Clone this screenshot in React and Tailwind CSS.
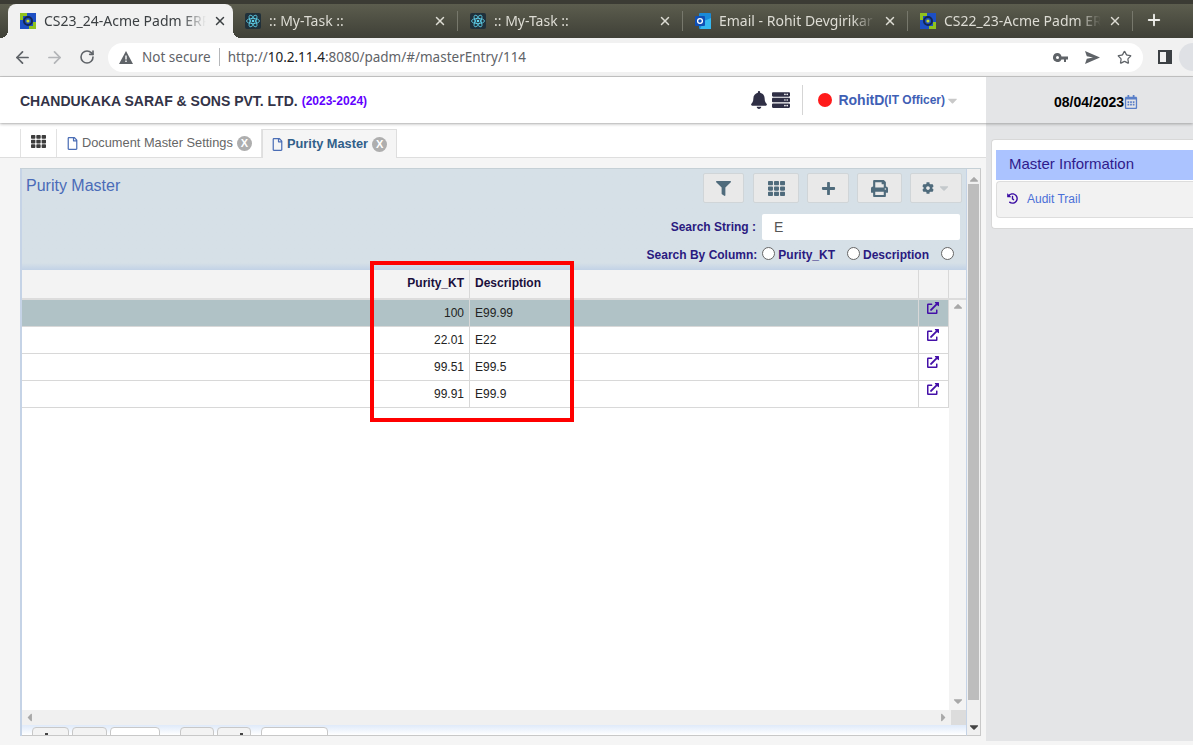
import React from 'react'
import { ArrowLeft, ArrowRight, RotateCw, Star, X, Plus } from 'lucide-react'
import { FaFilter, FaTh, FaPlus, FaPrint, FaCog, FaBell, FaServer, FaRegCalendarAlt, FaHistory, FaExternalLinkAlt, FaRegFile, FaCaretDown, FaCaretUp, FaCaretLeft, FaCaretRight } from 'react-icons/fa'

const AcmeIcon = () => (
    <svg width="16" height="16" viewBox="0 0 16 16" className="shrink-0">
        <rect width="16" height="16" fill="#1d4fc4" />
        <path d="M0 0h7v3H3v4H0zM9 13h4V9h3v7H9z" fill="#8fc31f" />
        <circle cx="8" cy="8" r="4" fill="none" stroke="#14264f" strokeWidth="2" />
        <circle cx="8" cy="8" r="1.6" fill="#c8d92b" />
    </svg>
)

const ReactIcon = () => (
    <svg width="16" height="16" viewBox="0 0 16 16" className="shrink-0">
        <rect width="16" height="16" rx="2" fill="#20303a" />
        <g fill="none" stroke="#5fd3ee" strokeWidth="0.8">
            <ellipse cx="8" cy="8" rx="6.5" ry="2.6" />
            <ellipse cx="8" cy="8" rx="6.5" ry="2.6" transform="rotate(60 8 8)" />
            <ellipse cx="8" cy="8" rx="6.5" ry="2.6" transform="rotate(120 8 8)" />
        </g>
        <circle cx="8" cy="8" r="1.3" fill="#5fd3ee" />
    </svg>
)

const OutlookIcon = () => (
    <svg width="16" height="16" viewBox="0 0 16 16" className="shrink-0">
        <rect x="4" width="12" height="16" rx="1" fill="#1a8ad8" />
        <path d="M9 8l7-3v11H5z" fill="#35b8f0" />
        <rect y="3" width="10" height="10" rx="1" fill="#0f4fb5" />
        <circle cx="5" cy="8" r="2.4" fill="none" stroke="#fff" strokeWidth="1.3" />
    </svg>
)

const browserTabs = [
    { title: 'CS23_24-Acme Padm ERP', icon: <AcmeIcon />, active: true },
    { title: ':: My-Task ::', icon: <ReactIcon /> },
    { title: ':: My-Task ::', icon: <ReactIcon /> },
    { title: 'Email - Rohit Devgirikar', icon: <OutlookIcon /> },
    { title: 'CS22_23-Acme Padm ERP', icon: <AcmeIcon /> },
]

const BrowserTabs = () => {
    return (
        <div className="h-[38px] flex bg-gradient-to-b from-[#5c5d4e] to-[#3f4037] border-t-4 border-[#3b3b34] pl-2 font-['Noto_Sans',sans-serif] text-sm">
            {browserTabs.map((tab, i) => (
                <div key={i} className={tab.active
                    ? "relative w-[225px] h-[34px] flex items-center pl-3 gap-2 bg-[#f1f1f1] rounded-t-lg text-[#3c4043]"
                    : "w-[225px] h-[34px] flex items-center pl-3 gap-2 text-[#dddcd4]"}>
                    {tab.icon}
                    <span className="w-[162px] overflow-hidden whitespace-nowrap [mask-image:linear-gradient(to_right,black_85%,transparent)]">{tab.title}</span>
                    <X size={14} strokeWidth={2.5} className="shrink-0 -ml-[1px]" />
                    {i > 0 && <span className="h-5 w-px bg-[#77786c] ml-[2px]"></span>}
                    {tab.active && <span className="absolute -left-2 bottom-0 w-2 h-2 bg-[radial-gradient(circle_at_0_0,transparent_8px,#f1f1f1_8px)]"></span>}
                    {tab.active && <span className="absolute -right-2 bottom-0 w-2 h-2 bg-[radial-gradient(circle_at_100%_0,transparent_8px,#f1f1f1_8px)]"></span>}
                </div>
            ))}
            <Plus size={18} strokeWidth={2.5} className="text-[#eeeeea] ml-[12px] mt-[7px]" />
        </div>
    )
}

const BrowserToolbar = () => {
    return (
        <div className="h-[39px] flex items-center bg-[#f1f1f1] border-b border-[#c9c9c9] font-['Noto_Sans',sans-serif]">
            <ArrowLeft size={19} strokeWidth={2.2} className="text-[#5f6368] ml-[13px] shrink-0" />
            <ArrowRight size={19} strokeWidth={2.2} className="text-[#b3b5b8] ml-[13px] shrink-0" />
            <RotateCw size={16} strokeWidth={2.4} className="text-[#5f6368] ml-[15px] shrink-0" />
            <div className="w-[1035px] h-[29px] ml-[13px] shrink-0 flex items-center bg-white rounded-full pl-[11px] text-[13.5px]">
                <svg width="14" height="13" viewBox="0 0 14 13"><path d="M7 0l7 13H0z" fill="#5f6368" /><path d="M6.3 4.5h1.4v4H6.3zM6.3 9.5h1.4v1.4H6.3z" fill="#fff" /></svg>
                <span className="ml-[9px] text-[#5f6368]">Not secure</span>
                <span className="h-[18px] w-px bg-[#b5b7ba] ml-[8px]"></span>
                <span className="ml-[8px] text-[#5f6368]">http://<span className="text-[#202124]">10.2.11.4</span>:8080/padm/#/masterEntry/114</span>
                <svg width="15" height="9" viewBox="0 0 15 9" className="ml-auto text-[#5f6368]">
                    <path d="M4.5 0a4.5 4.5 0 1 0 4 6.5H11V9h2V6.5h2v-3H8.500A4.500 4.500 0 0 0 4.500 0zm0 3a1.500 1.500 0 1 1 0 3 1.500 1.500 0 0 1 0-3z" fill="currentColor" />
                </svg>
                <svg width="15" height="13" viewBox="0 0 15 13" className="ml-[17px] text-[#5f6368]">
                    <path d="M0 0l15 6.500L0 13l1.800-5.300L8 6.500 1.800 5.300z" fill="currentColor" />
                </svg>
                <Star size={15} strokeWidth={2} className="text-[#5f6368] ml-[17px] mr-[11px]" />
            </div>
            <div className="w-[14px] h-[14px] ml-[15px] shrink-0 border-2 border-[#3c4043] border-r-[6px]"></div>
            <div className="w-[28px] h-[28px] ml-[7px] rounded-full bg-[#dfe1e5] shrink-0"></div>
        </div>
    )
}

const PageHeader = () => {
    return (
        <div className="h-[46px] flex relative z-10 shadow-[0_1px_3px_rgba(0,0,0,0.3)]">
            <div className="w-[986px] bg-white flex items-center pl-5">
                <span className="mt-[2px] text-sm font-bold text-[#333347]">CHANDUKAKA SARAF & SONS PVT. LTD.</span>
                <span className="mt-[2px] ml-[4px] text-xs font-bold text-[#6200ff]">(2023-2024)</span>
                <FaBell size={18} className="text-[#2f2f45] ml-auto" />
                <FaServer size={18} className="text-[#2f2f45] ml-[4px]" />
                <span className="h-[30px] w-px bg-[#d5d5d5] ml-3"></span>
                <span className="w-[14px] h-[14px] rounded-full bg-[#ff1a1a] ml-[15px]"></span>
                <span className="ml-[6px] text-sm font-bold text-[#3f60b5]">RohitD</span>
                <span className="text-xs font-bold text-[#3f60b5]">(IT Officer)</span>
                <FaCaretDown size={15} className="text-[#c9c9c9] mr-[26px]" />
            </div>
            <div className="flex-1 bg-[#e4e5e7] flex items-center pl-[68px] pt-[3px] text-sm font-bold text-black">
                08/04/2023
                <FaRegCalendarAlt size={14} className="text-[#5a7fc8]" />
            </div>
        </div>
    )
}

const CloseBadge = () => (
    <span className="w-[15px] h-[15px] ml-px rounded-full bg-[#aeaeae] text-white text-[11px] font-bold flex items-center justify-center">X</span>
)

const PageTabs = () => {
    return (
        <div className="h-[34px] mt-px pt-[5px] bg-white border-b border-[#dedede] flex pl-5 text-[12.8px]">
            <div className="w-[37px] border-x border-[#e2e2e2] flex items-center justify-center pb-[4px]">
                <FaTh size={15} className="text-[#3d3d3d]" />
            </div>
            <div className="w-[205px] flex items-center pl-[9px] gap-[3px] border-r border-[#e2e2e2] text-[#666]">
                <FaRegFile size={13} className="text-[#4a6db5] shrink-0" />
                <span>Document Master Settings</span>
                <CloseBadge />
            </div>
            <div className="w-[135px] h-[29px] flex items-center pl-[8px] gap-[3px] border-x border-t border-[#dedede] bg-[#f5f5f5] font-bold text-[#31608a]">
                <FaRegFile size={13} className="text-[#4a6db5] shrink-0" />
                <span>Purity Master</span>
                <CloseBadge />
            </div>
        </div>
    )
}

const toolButton = "h-[30px] flex items-center justify-center bg-[#e9e9e9] border border-[#d0d5d8] rounded-[2px] text-[#4f6b7c]"

const PanelHeader = () => {
    return (
        <div className="h-[101px] flex justify-between pl-[4px] pr-[4px] pt-[4px] bg-gradient-to-b from-[#d6e0e7] from-[93%] to-[#c2d2e6]">
            <h3 className="text-base text-[#4a6bb8] mt-[1px]">Purity Master</h3>
            <div className="flex flex-col items-end">
                <div className="flex">
                    <div className={toolButton + " w-[41px]"}><FaFilter size={15} /></div>
                    <div className={toolButton + " w-[46px] ml-[9px]"}><FaTh size={17} /></div>
                    <div className={toolButton + " w-[42px] ml-[8px]"}><FaPlus size={15} /></div>
                    <div className={toolButton + " w-[45px] ml-[8px]"}><FaPrint size={17} /></div>
                    <div className={toolButton + " w-[52px] ml-[8px] gap-[3px]"}>
                        <FaCog size={12} />
                        <FaCaretDown size={14} className="text-[#c4c9cc]" />
                    </div>
                </div>
                <div className="flex items-center mt-[11px] text-xs font-bold text-[#2a1a80]">
                    <span>Search String :</span>
                    <div className="w-[198px] h-[26px] ml-[6px] mr-[2px] bg-white rounded-[2px] flex items-center pl-3 text-sm font-normal text-[#555]">E</div>
                </div>
                <div className="flex items-center mt-[7px] text-xs font-bold text-[#2a1a80]">
                    <span>Search By Column:</span>
                    <span className="w-[13px] h-[13px] rounded-full bg-white border border-[#666] ml-[5px] -mt-[3px]"></span>
                    <span className="ml-[3px]">Purity_KT</span>
                    <span className="w-[13px] h-[13px] rounded-full bg-white border border-[#666] ml-3 -mt-[3px]"></span>
                    <span className="ml-[3px]">Description</span>
                    <span className="w-[13px] h-[13px] rounded-full bg-white border border-[#666] ml-3 mr-[8px] -mt-[3px]"></span>
                </div>
            </div>
        </div>
    )
}

const rows = [
    { kt: '100', desc: 'E99.99', selected: true },
    { kt: '22.01', desc: 'E22' },
    { kt: '99.51', desc: 'E99.5' },
    { kt: '99.91', desc: 'E99.9' },
]

const GridTable = () => {
    return (
        <div className="flex-1 flex flex-col bg-white min-h-0">
            <div className="h-[30px] flex bg-[#f3f3f3] border-b-2 border-[#dcdcdc] text-xs font-bold text-[#1a0f3c]">
                <div className="w-[448px] border-r border-[#d8d8d8] flex items-center justify-end pr-[5px] pb-[2px]">Purity_KT</div>
                <div className="w-[449px] border-r border-[#d8d8d8] flex items-center pl-[5px] pb-[2px]">Description</div>
                <div className="w-[30px] border-r border-[#d8d8d8]"></div>
            </div>
            <div className="flex-1 flex min-h-0">
                <div className="w-[927px]">
                    {rows.map((row, i) => (
                        <div key={i} className={row.selected
                            ? "h-[27px] flex bg-[#b0c2c6] border-b border-[#d8d8d8] text-xs text-[#222]"
                            : "h-[27px] flex bg-white border-b border-[#d8d8d8] text-xs text-[#222]"}>
                            <div className="w-[448px] border-r border-[#d8d8d8] flex items-center justify-end pr-[5px]">{row.kt}</div>
                            <div className="w-[449px] border-r border-[#d8d8d8] flex items-center pl-[5px]">{row.desc}</div>
                            <div className="w-[30px] border-r border-[#d8d8d8] flex justify-center pt-[2px] pr-[2px]">
                                <FaExternalLinkAlt size={12} className="text-[#4410a8]" />
                            </div>
                        </div>
                    ))}
                </div>
                <div className="flex-1 bg-[#f3f3f3] flex flex-col items-center justify-between pb-[2px]">
                    <FaCaretUp size={14} className="text-[#a8a8a8] mt-[-1px]" />
                    <FaCaretDown size={14} className="text-[#a8a8a8]" />
                </div>
            </div>
            <div className="h-[15px] flex bg-[#f0f0f0]">
                <div className="flex-1 flex items-center justify-between px-[1px]">
                    <FaCaretLeft size={13} className="text-[#a8a8a8]" />
                    <FaCaretRight size={13} className="text-[#a8a8a8]" />
                </div>
                <div className="w-[15px] bg-[#dcdcdc]"></div>
            </div>
        </div>
    )
}

const pagerButton = "h-[14px] bg-[#f3f3f3] border border-[#c8c8c8] rounded-t"

const PanelFooter = () => {
    return (
        <div className="h-[11px] shrink-0 flex items-start pt-[2px] pl-[10px] overflow-hidden bg-gradient-to-b from-[#dfeafa] to-white border-b border-[#c8c8c8]">
            <div className={pagerButton + " w-[37px]"}><div className="w-[3px] h-[2px] mt-[5px] ml-[12px] bg-[#444]"></div></div>
            <div className={pagerButton + " w-[35px] ml-[3px]"}></div>
            <div className={pagerButton + " w-[50px] ml-[3px] bg-white"}></div>
            <div className={pagerButton + " w-[34px] ml-[20px]"}></div>
            <div className={pagerButton + " w-[34px] ml-[3px]"}><div className="w-[3px] h-[2px] mt-[5px] ml-[22px] bg-[#444]"></div></div>
            <div className={pagerButton + " w-[67px] ml-[10px] bg-white"}></div>
            <span className="ml-[549px] mt-[5px] text-xs leading-4 text-[#333] whitespace-nowrap">View 1 - 4 of 4</span>
        </div>
    )
}

const OuterScrollbar = () => {
    return (
        <div className="w-[15px] flex flex-col items-center bg-[#f0f0f0] border-r border-b border-[#c8c8c8] border-l border-l-[#c5d3e6]">
            <FaCaretUp size={14} className="text-[#a8a8a8] mt-[3px] -mb-[3px] shrink-0" />
            <div className="w-[11px] flex-1 bg-[#bdbdbd] mt-[1px]"></div>
            <FaCaretDown size={14} className="text-[#444] mt-[20px] mb-[1px] shrink-0" />
        </div>
    )
}

const InfoPanel = () => {
    return (
        <div className="w-[207px] h-[618px] bg-[#e4e5e7] pt-4 pl-[5px]">
            <div className="h-[90px] pt-[10px] pl-[4px] bg-white border-y border-l border-[#d8d8d8] rounded-l">
                <div className="h-[30px] bg-[#abc3ff] flex items-center pl-[13px] pb-[2px] text-[15px] text-[#2f1a8c]">Master Information</div>
                <div className="h-[37px] mt-px pb-[2px] bg-[#f2f2f2] border-y border-l border-[#ddd] rounded-l flex items-center pl-[10px] text-xs">
                    <FaHistory size={11} className="text-[#3a0ca3]" />
                    <span className="ml-[9px] text-[#4a6fd8]">Audit Trail</span>
                </div>
            </div>
        </div>
    )
}

const App = () => {
    return (
        <div className="relative w-[1193px] h-[745px] overflow-hidden flex flex-col bg-[#f5f5f5] font-['Liberation_Sans',Arial,sans-serif]">
            <BrowserTabs />
            <BrowserToolbar />
            <PageHeader />
            <div className="flex-1 flex min-h-0">
                <div className="w-[986px] flex flex-col">
                    <PageTabs />
                    <div className="h-[568px] w-[961px] ml-5 mt-[10px] flex border-t border-[#c5d0d6]">
                        <div className="w-[946px] flex flex-col border-l-2 border-[#c5d3e6]">
                            <PanelHeader />
                            <GridTable />
                            <PanelFooter />
                        </div>
                        <OuterScrollbar />
                    </div>
                </div>
                <InfoPanel />
            </div>
            <div className="absolute left-[370px] top-[261px] w-[204px] h-[161px] border-4 border-[#ff0000]"></div>
        </div>
    )
}

export default App
